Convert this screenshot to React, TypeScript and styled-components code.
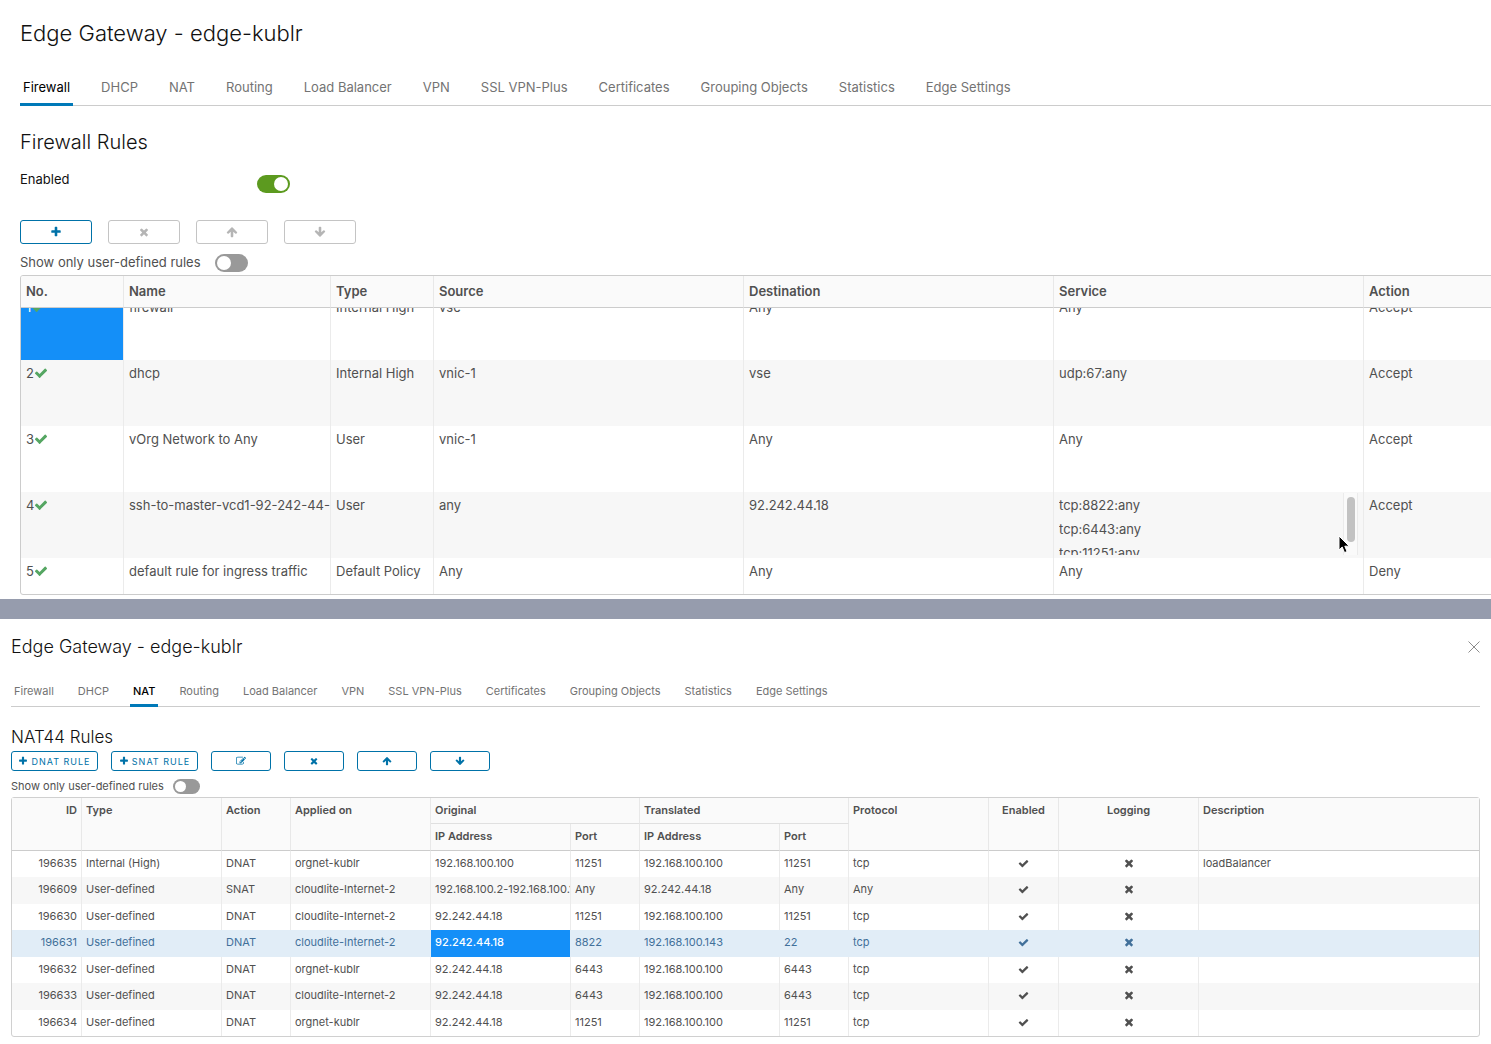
import React, { useLayoutEffect, useRef } from "react";
import styled, { createGlobalStyle, css } from "styled-components";

const GlobalStyle = createGlobalStyle`
  *, *::before, *::after { box-sizing: border-box; }
  body {
    margin: 0;
    background: #fff;
    color: #505050;
    font-family: Inter, "Liberation Sans", sans-serif;
  }
`;

const BLUE = "#0072a8";
const SELECTED = "#148ff8";

/* ---------- icons ---------- */

const Glyph = styled.svg<{ $size: number; $flip?: boolean }>`
  width: ${(p) => p.$size}px;
  height: ${(p) => p.$size}px;
  fill: currentColor;
  flex: none;
  ${(p) => p.$flip && css`transform: rotate(180deg);`}
`;

const PATHS = {
  check:
    "M1671 566q0 40-28 68l-724 724-136 136q-28 28-68 28t-68-28l-136-136-362-362q-28-28-28-68t28-68l136-136q28-28 68-28t68 28l294 295 656-657q28-28 68-28t68 28l136 136q28 28 28 68z",
  times:
    "M1490 1322q0 40-28 68l-136 136q-28 28-68 28t-68-28l-294-294-294 294q-28 28-68 28t-68-28l-136-136q-28-28-28-68t28-68l294-294-294-294q-28-28-28-68t28-68l136-136q28-28 68-28t68 28l294 294 294-294q28-28 68-28t68 28l136 136q28 28 28 68t-28 68l-294 294 294 294q28 28 28 68z",
  plus:
    "M1600 736v192q0 40-28 68t-68 28h-416v416q0 40-28 68t-68 28h-192q-40 0-68-28t-28-68v-416h-416q-40 0-68-28t-28-68v-192q0-40 28-68t68-28h416v-416q0-40 28-68t68-28h192q40 0 68 28t28 68v416h416q40 0 68 28t28 68z",
  arrow:
    "M1675 971q0 51-37 90l-75 75q-38 38-91 38-54 0-90-38l-294-293v704q0 52-37.500 84.500t-90.500 32.500h-128q-53 0-90.500-32.500t-37.500-84.500v-704l-294 293q-36 38-90 38t-90-38l-75-75q-38-38-38-90 0-53 38-91l651-651q35-37 90-37 54 0 91 37l651 651q37 39 37 91z",
  edit:
    "M888 1184l116-116-152-152-116 116v56h96v96h56zm440-720q-16-16-33 1l-350 350q-17 17-1 33t33-1l350-350q17-17 1-33zm80 594v190q0 119-84.500 203.500t-203.500 84.500h-832q-119 0-203.500-84.500t-84.500-203.500v-832q0-119 84.500-203.500t203.500-84.500h832q63 0 117 25 15 7 18 23 3 17-9 29l-49 49q-14 14-32 8-23-6-45-6h-832q-66 0-113 47t-47 113v832q0 66 47 113t113 47h832q66 0 113-47t47-113v-126q0-13 9-22l64-64q15-15 35-7t20 29zm-96-738l288 288-672 672h-288v-288zm444 132l-92 92-288-288 92-92q28-28 68-28t68 28l152 152q28 28 28 68t-28 68z",
};

type IconName = keyof typeof PATHS | "arrowDown";

function Icon({ name, size }: { name: IconName; size: number }) {
  const down = name === "arrowDown";
  return (
    <Glyph viewBox="0 0 1792 1792" $size={size} $flip={down} aria-hidden="true">
      <path d={PATHS[name === "arrowDown" ? "arrow" : name]} />
    </Glyph>
  );
}

/* ---------- shared parts ---------- */

const Title = styled.h1<{ $compact?: boolean }>`
  margin: 0;
  color: #111;
  font-weight: 300;
  font-size: ${(p) => (p.$compact ? 18 : 22)}px;
  line-height: ${(p) => (p.$compact ? 24 : 28)}px;
`;

const Heading = styled.h2<{ $compact?: boolean }>`
  margin: 0;
  color: #111;
  font-weight: 300;
  font-size: ${(p) => (p.$compact ? 17 : 20)}px;
  line-height: ${(p) => (p.$compact ? 20 : 28)}px;
`;

const TabBar = styled.nav<{ $compact?: boolean }>`
  display: flex;
  gap: ${(p) => (p.$compact ? 18 : 25)}px;
  border-bottom: 1px solid #ccc;
  white-space: nowrap;
`;

const Tab = styled.a<{ $compact?: boolean; $active?: boolean }>`
  padding: 0 3px;
  margin-bottom: -1px;
  font-size: ${(p) => (p.$compact ? 11 : 13)}px;
  line-height: ${(p) => (p.$compact ? 26 : 32)}px;
  color: ${(p) => (p.$active ? "#000" : "#737373")};
  font-weight: ${(p) => (p.$active && p.$compact ? 500 : 400)};
  text-decoration: none;
  border-bottom: 3px solid ${(p) => (p.$active ? "#0079b8" : "transparent")};
`;

const TABS = [
  "Firewall", "DHCP", "NAT", "Routing", "Load Balancer", "VPN",
  "SSL VPN-Plus", "Certificates", "Grouping Objects", "Statistics", "Edge Settings",
];

function Tabs({ active, compact }: { active: string; compact?: boolean }) {
  return (
    <TabBar $compact={compact} aria-label="Edge gateway sections">
      {TABS.map((t) => (
        <Tab key={t} href="#" $compact={compact} $active={t === active}>
          {t}
        </Tab>
      ))}
    </TabBar>
  );
}

const Toggle = styled.input<{ $compact?: boolean }>`
  appearance: none;
  display: flex;
  flex: none;
  margin: 0;
  padding: 2px;
  width: ${(p) => (p.$compact ? 27 : 33)}px;
  height: ${(p) => (p.$compact ? 15 : 18)}px;
  border-radius: 9px;
  background: #999;
  &::before {
    content: "";
    width: ${(p) => (p.$compact ? 11 : 14)}px;
    height: ${(p) => (p.$compact ? 11 : 14)}px;
    border-radius: 50%;
    background: #fff;
  }
  &:checked {
    background: #5c9a1f;
    justify-content: flex-end;
  }
`;

const EnabledRow = styled.div`
  display: flex;
  align-items: flex-end;
  padding-top: 13px;
`;

const EnabledLabel = styled.label`
  width: 237px;
  padding-bottom: 4px;
  color: #111;
  font-size: 13px;
  line-height: 20px;
`;

const FilterRow = styled.div<{ $compact?: boolean }>`
  display: flex;
  align-items: center;
  gap: ${(p) => (p.$compact ? 9 : 14)}px;
  height: ${(p) => (p.$compact ? 26 : 31)}px;
  padding-top: ${(p) => (p.$compact ? 5 : 7)}px;
`;

const FilterLabel = styled.label<{ $compact?: boolean }>`
  padding-bottom: ${(p) => (p.$compact ? 1 : 3)}px;
  font-size: ${(p) => (p.$compact ? 11 : 13)}px;
  line-height: 20px;
`;

const Actions = styled.div<{ $compact?: boolean }>`
  display: flex;
  gap: ${(p) => (p.$compact ? 13 : 16)}px;
`;

const ActionButton = styled.button<{ $compact?: boolean; $wide?: boolean }>`
  display: flex;
  align-items: center;
  justify-content: center;
  gap: 3px;
  padding: 0;
  width: ${(p) => (p.$wide ? 87 : p.$compact ? 60 : 72)}px;
  height: ${(p) => (p.$compact ? 20 : 24)}px;
  border: 1px solid ${BLUE};
  border-radius: 3px;
  background: #fff;
  color: ${BLUE};
  font-family: inherit;
  font-size: 9px;
  letter-spacing: 1px;
  white-space: nowrap;
  &:disabled {
    border-color: #c4c4c4;
    color: #b5b5b5;
  }
`;

/* ---------- firewall panel ---------- */

const FirewallPanel = styled.section`
  padding: 19px 0 4px 20px;
  overflow: hidden;
`;

const FirewallTabs = styled.div`
  padding: 24px 0 22px;
`;

const FirewallActions = styled.div`
  padding-top: 27px;
`;

const GridPane = styled.div`
  width: 1656px;
  height: 320px;
  overflow: hidden;
  border: 1px solid #ccc;
  border-radius: 3px;
`;

const FirewallTable = styled.table`
  width: 100%;
  table-layout: fixed;
  border-collapse: separate;
  border-spacing: 0;
  font-size: 13px;
  line-height: 24px;
`;

const FwHead = styled.th`
  position: sticky;
  top: 0;
  z-index: 1;
  height: 32px;
  padding: 0 5px 2px;
  text-align: left;
  font-weight: 600;
  background: #fafafa;
  border-right: 1px solid #e8e8e8;
  border-bottom: 1px solid #ccc;
`;

const FwRow = styled.tr`
  &:nth-child(even) { background: #f7f7f7; }
`;

const FwCell = styled.td<{ $selected?: boolean }>`
  height: 66px;
  padding: 1px 5px 3px;
  vertical-align: top;
  overflow: hidden;
  white-space: nowrap;
  border-right: 1px solid #ebebeb;
  ${(p) => p.$selected && css`
    background: ${SELECTED};
    color: #fff;
  `}
`;

const RuleNumber = styled.span`
  display: flex;
  align-items: center;
`;

const Applied = styled.span`
  display: flex;
  color: #55a662;
`;

const ServicePane = styled.div`
  display: flex;
  justify-content: space-between;
  height: 62px;
  overflow: hidden;
  position: relative;
`;

const ServiceList = styled.ul`
  margin: 0;
  padding: 0;
  list-style: none;
`;

const ScrollTrack = styled.div`
  width: 15px;
  height: 62px;
  padding: 4px 3px;
  background: #fafafa;
  border: 1px solid #ebebeb;
  border-width: 0 1px;
`;

const ScrollThumb = styled.div`
  width: 8px;
  height: 45px;
  border-radius: 4px;
  background: #c2c2c2;
`;

const Cursor = styled.svg`
  position: absolute;
  right: 8px;
  top: 42px;
  width: 12px;
  height: 19px;
`;

const FW_COLUMNS: [string, number][] = [
  ["No.", 103], ["Name", 207], ["Type", 103], ["Source", 310],
  ["Destination", 310], ["Service", 310], ["Action", 311],
];

const FW_RULES = [
  { name: "firewall", type: "Internal High", source: "vse", dest: "Any", service: ["Any"], action: "Accept" },
  { name: "dhcp", type: "Internal High", source: "vnic-1", dest: "vse", service: ["udp:67:any"], action: "Accept" },
  { name: "vOrg Network to Any", type: "User", source: "vnic-1", dest: "Any", service: ["Any"], action: "Accept" },
  { name: "ssh-to-master-vcd1-92-242-44-18", type: "User", source: "any", dest: "92.242.44.18", service: ["tcp:8822:any", "tcp:6443:any", "tcp:11251:any"], action: "Accept" },
  { name: "default rule for ingress traffic", type: "Default Policy", source: "Any", dest: "Any", service: ["Any"], action: "Deny" },
];

function Services({ items }: { items: string[] }) {
  if (items.length === 1) return <>{items[0]}</>;
  return (
    <ServicePane>
      <ServiceList>
        {items.map((s) => <li key={s}>{s}</li>)}
      </ServiceList>
      <ScrollTrack><ScrollThumb /></ScrollTrack>
      <Cursor viewBox="0 0 12 19" aria-hidden="true">
        <path d="M1 1v14l3.200-3 2.300 5.600 2.600-1.100-2.300-5.300h4.400z" fill="#000" stroke="#fff" strokeWidth="1" />
      </Cursor>
    </ServicePane>
  );
}

function FirewallGrid() {
  const pane = useRef<HTMLDivElement>(null);
  useLayoutEffect(() => {
    if (pane.current) pane.current.scrollTop = 14;
  }, []);
  return (
    <GridPane ref={pane}>
      <FirewallTable>
        <colgroup>
          {FW_COLUMNS.map(([label, width]) => <col key={label} width={width} />)}
        </colgroup>
        <thead>
          <tr>{FW_COLUMNS.map(([label]) => <FwHead key={label} scope="col">{label}</FwHead>)}</tr>
        </thead>
        <tbody>
          {FW_RULES.map((r, i) => (
            <FwRow key={r.name}>
              <FwCell $selected={i === 0}>
                <RuleNumber>{i + 1}<Applied><Icon name="check" size={14} /></Applied></RuleNumber>
              </FwCell>
              <FwCell>{r.name}</FwCell>
              <FwCell>{r.type}</FwCell>
              <FwCell>{r.source}</FwCell>
              <FwCell>{r.dest}</FwCell>
              <FwCell><Services items={r.service} /></FwCell>
              <FwCell>{r.action}</FwCell>
            </FwRow>
          ))}
        </tbody>
      </FirewallTable>
    </GridPane>
  );
}

/* ---------- NAT panel ---------- */

const Divider = styled.div`
  height: 20px;
  background: #969cad;
`;

const NatPanel = styled.section`
  padding: 16px 11px 7px;
`;

const NatHeader = styled.header`
  display: flex;
  justify-content: space-between;
  align-items: center;
`;

const CloseButton = styled.button`
  display: flex;
  padding: 0;
  border: 0;
  background: none;
  color: #8c8c8c;
`;

const CloseMark = styled.svg`
  width: 12px;
  height: 12px;
  stroke: currentColor;
`;

const NatTabs = styled.div`
  padding: 19px 0 20px;
`;

const NatActions = styled.div`
  padding-top: 4px;
`;

const NatTable = styled.table`
  width: 100%;
  table-layout: fixed;
  border-collapse: separate;
  border-spacing: 0;
  border: 1px solid #d0d0d0;
  border-radius: 3px;
  font-size: 11px;
  line-height: 20px;
`;

type Align = "left" | "right" | "center";

const NatHead = styled.th<{ $align?: Align; $group?: boolean; $sub?: boolean; $last?: boolean }>`
  height: ${(p) => (p.$sub ? 27 : 26)}px;
  padding: 2px 4px;
  vertical-align: top;
  text-align: ${(p) => p.$align ?? "left"};
  font-weight: 600;
  background: #fafafa;
  border-right: ${(p) => (p.$last ? 0 : 1)}px solid #e8e8e8;
  border-bottom: 1px solid ${(p) => (p.$group ? "#e0e0e0" : "#ccc")};
`;

const NatRow = styled.tr<{ $selected?: boolean }>`
  height: 26px;
  &:nth-child(even) {
    height: 27px;
    background: #f7f7f7;
  }
  ${(p) => p.$selected && css`
    &&:nth-child(n) { background: #e1edf7; }
    color: #41709a;
  `}
`;

const NatCell = styled.td<{ $align?: Align; $picked?: boolean; $plain?: boolean }>`
  padding: 2px 4px;
  vertical-align: top;
  overflow: hidden;
  white-space: nowrap;
  text-align: ${(p) => p.$align ?? "left"};
  border-right: 1px solid ${(p) => (p.$plain ? "transparent" : "#ebebeb")};
  &:last-child { border-right: 0; }
  ${(p) => p.$picked && css`
    background: ${SELECTED} padding-box;
    color: #fff;
    font-weight: 500;
  `}
`;

const Mark = styled.span`
  display: flex;
  align-items: center;
  justify-content: center;
  height: 20px;
`;

const NAT_WIDTHS = [70, 140, 69, 140, 140, 69, 140, 69, 140, 70, 140];

const NAT_RULES = [
  ["196635", "Internal (High)", "DNAT", "orgnet-kublr", "192.168.100.100", "11251", "192.168.100.100", "11251", "tcp", "loadBalancer"],
  ["196609", "User-defined", "SNAT", "cloudlite-Internet-2", "192.168.100.2-192.168.100.1", "Any", "92.242.44.18", "Any", "Any", ""],
  ["196630", "User-defined", "DNAT", "cloudlite-Internet-2", "92.242.44.18", "11251", "192.168.100.100", "11251", "tcp", ""],
  ["196631", "User-defined", "DNAT", "cloudlite-Internet-2", "92.242.44.18", "8822", "192.168.100.143", "22", "tcp", ""],
  ["196632", "User-defined", "DNAT", "orgnet-kublr", "92.242.44.18", "6443", "192.168.100.100", "6443", "tcp", ""],
  ["196633", "User-defined", "DNAT", "cloudlite-Internet-2", "92.242.44.18", "6443", "192.168.100.100", "6443", "tcp", ""],
  ["196634", "User-defined", "DNAT", "orgnet-kublr", "92.242.44.18", "11251", "192.168.100.100", "11251", "tcp", ""],
];

const SELECTED_ID = "196631";

function NatGrid() {
  return (
    <NatTable>
      <colgroup>
        {NAT_WIDTHS.map((w, i) => <col key={i} width={w} />)}
        <col />
      </colgroup>
      <thead>
        <tr>
          <NatHead rowSpan={2} $align="right">ID</NatHead>
          <NatHead rowSpan={2}>Type</NatHead>
          <NatHead rowSpan={2}>Action</NatHead>
          <NatHead rowSpan={2}>Applied on</NatHead>
          <NatHead colSpan={2} $group>Original</NatHead>
          <NatHead colSpan={2} $group>Translated</NatHead>
          <NatHead rowSpan={2}>Protocol</NatHead>
          <NatHead rowSpan={2} $align="center">Enabled</NatHead>
          <NatHead rowSpan={2} $align="center">Logging</NatHead>
          <NatHead rowSpan={2} $last>Description</NatHead>
        </tr>
        <tr>
          <NatHead $sub>IP Address</NatHead>
          <NatHead $sub>Port</NatHead>
          <NatHead $sub>IP Address</NatHead>
          <NatHead $sub>Port</NatHead>
        </tr>
      </thead>
      <tbody>
        {NAT_RULES.map((r) => {
          const selected = r[0] === SELECTED_ID;
          return (
            <NatRow key={r[0]} $selected={selected}>
              {r.slice(0, 9).map((value, i) => (
                <NatCell key={i} $align={i === 0 ? "right" : "left"} $plain={selected} $picked={selected && i === 4}>
                  {value}
                </NatCell>
              ))}
              <NatCell $plain={selected}><Mark role="img" aria-label="Yes"><Icon name="check" size={11} /></Mark></NatCell>
              <NatCell $plain={selected}><Mark role="img" aria-label="No"><Icon name="times" size={12} /></Mark></NatCell>
              <NatCell>{r[9]}</NatCell>
            </NatRow>
          );
        })}
      </tbody>
    </NatTable>
  );
}

/* ---------- page ---------- */

export default function App() {
  return (
    <>
      <GlobalStyle />
      <FirewallPanel>
        <Title>Edge Gateway - edge-kublr</Title>
        <FirewallTabs><Tabs active="Firewall" /></FirewallTabs>
        <Heading>Firewall Rules</Heading>
        <EnabledRow>
          <EnabledLabel htmlFor="fw-enabled">Enabled</EnabledLabel>
          <Toggle id="fw-enabled" type="checkbox" defaultChecked />
        </EnabledRow>
        <FirewallActions>
          <Actions>
            <ActionButton aria-label="Add rule"><Icon name="plus" size={12} /></ActionButton>
            <ActionButton aria-label="Delete rule" disabled><Icon name="times" size={12} /></ActionButton>
            <ActionButton aria-label="Move rule up" disabled><Icon name="arrow" size={12} /></ActionButton>
            <ActionButton aria-label="Move rule down" disabled><Icon name="arrowDown" size={12} /></ActionButton>
          </Actions>
        </FirewallActions>
        <FilterRow>
          <FilterLabel htmlFor="fw-user">Show only user-defined rules</FilterLabel>
          <Toggle id="fw-user" type="checkbox" />
        </FilterRow>
        <FirewallGrid />
      </FirewallPanel>
      <Divider />
      <NatPanel>
        <NatHeader>
          <Title as="h2" $compact>Edge Gateway - edge-kublr</Title>
          <CloseButton aria-label="Close">
            <CloseMark viewBox="0 0 12 12"><path d="M0.500 0.500l11 11M11.500 0.500l-11 11" /></CloseMark>
          </CloseButton>
        </NatHeader>
        <NatTabs><Tabs active="NAT" compact /></NatTabs>
        <Heading $compact>NAT44 Rules</Heading>
        <NatActions>
          <Actions $compact>
            <ActionButton $compact $wide><Icon name="plus" size={10} />DNAT RULE</ActionButton>
            <ActionButton $compact $wide><Icon name="plus" size={10} />SNAT RULE</ActionButton>
            <ActionButton $compact aria-label="Edit rule"><Icon name="edit" size={10} /></ActionButton>
            <ActionButton $compact aria-label="Delete rule"><Icon name="times" size={10} /></ActionButton>
            <ActionButton $compact aria-label="Move rule up"><Icon name="arrow" size={10} /></ActionButton>
            <ActionButton $compact aria-label="Move rule down"><Icon name="arrowDown" size={10} /></ActionButton>
          </Actions>
        </NatActions>
        <FilterRow $compact>
          <FilterLabel $compact htmlFor="nat-user">Show only user-defined rules</FilterLabel>
          <Toggle $compact id="nat-user" type="checkbox" />
        </FilterRow>
        <NatGrid />
      </NatPanel>
    </>
  );
}
